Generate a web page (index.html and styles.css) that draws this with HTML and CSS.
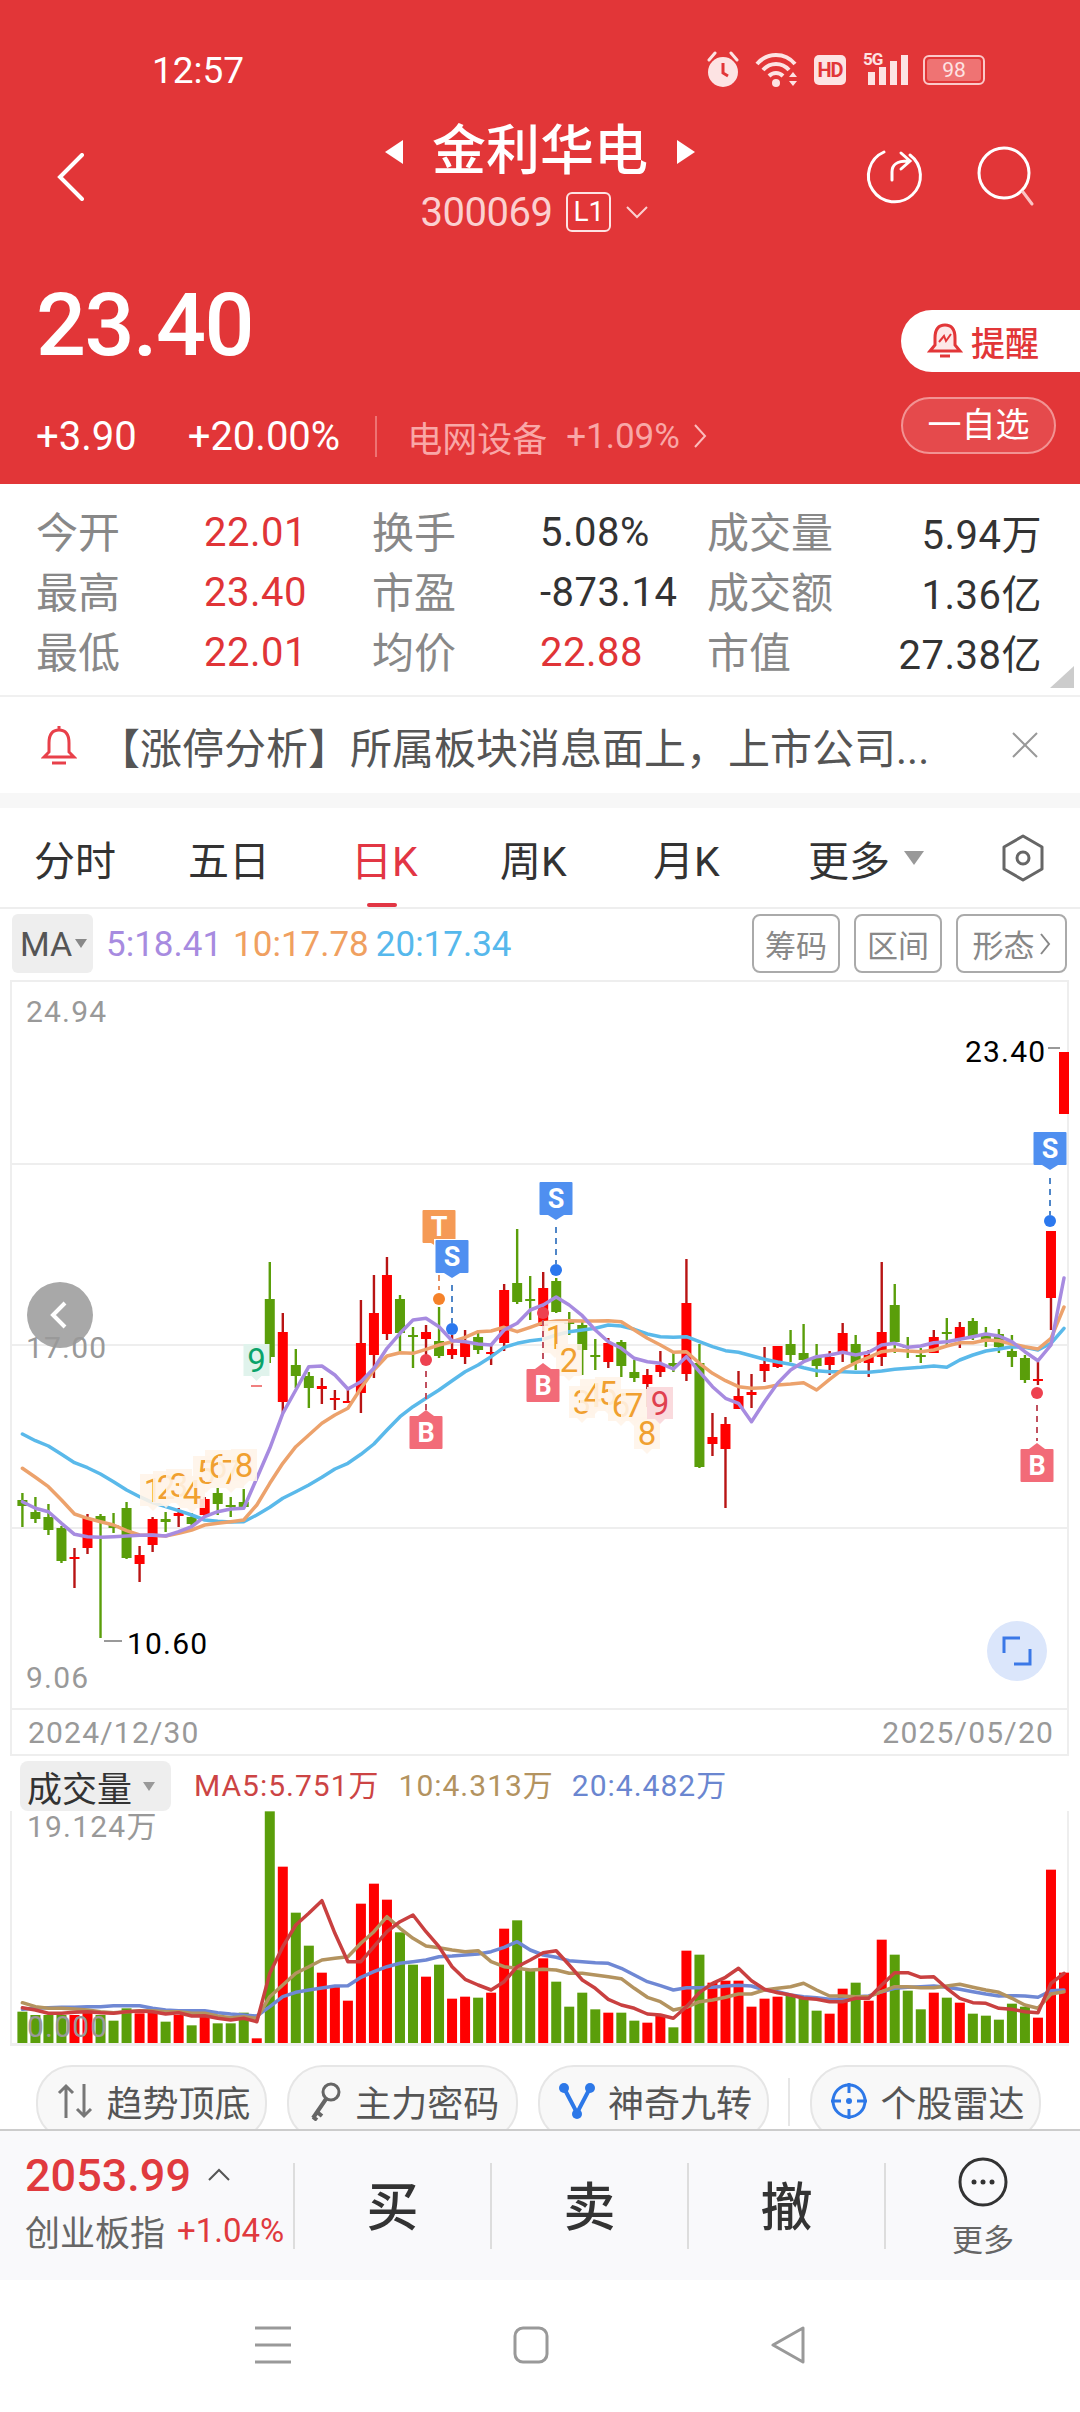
FILE: index.html
```html
<!DOCTYPE html>
<html>
	<head>
		<meta charset="utf-8">
		<title>金利华电</title>
		<link rel="stylesheet" href="styles.css">
	</head>
	<body>
		<header class="top">
			<div class="status">
				<span class="time">12:57</span>
				<div class="status-icons">
					<svg width="34" height="38" viewBox="0 0 34 38">
						<path d="M3 9 L9 2 M31 9 L25 2" stroke="#fde3e3" stroke-width="3" stroke-linecap="round"/>
						<circle cx="17" cy="21" r="15" fill="#fde3e3"/>
						<path d="M17 12 V22 L22 25" stroke="#e23638" stroke-width="3" fill="none"/>
					</svg>
					<svg width="44" height="36" viewBox="0 0 44 36">
						<path d="M2 12 C12 0 30 0 40 12 M8 18 C15 10 27 10 34 18 M14 24 C18 20 24 20 28 24" stroke="#fde3e3" stroke-width="4" fill="none"/>
						<circle cx="21" cy="31" r="4" fill="#fde3e3"/>
						<path d="M34 25 L38 20 L42 25 Z M34 29 H42 L38 34 Z" fill="#fde3e3"/>
					</svg>
					<span class="hd">HD</span>
					<div class="signal">
						<span class="five-g">5G</span>
						<i class="bar b1"></i><i class="bar b2"></i><i class="bar b3"></i><i class="bar b4"></i>
					</div>
					<div class="battery"><span class="battery-in">98</span></div>
				</div>
			</div>

			<div class="nav">
				<svg class="back" width="28" height="48" viewBox="0 0 28 48"><path d="M25 2 L3 24 L25 46" stroke="#fff" stroke-width="4" fill="none" stroke-linecap="round"/></svg>
				<div class="title-box">
					<div class="title-row">
						<i class="tri-left"></i>
						<span class="title">金利华电</span>
						<i class="tri-right"></i>
					</div>
					<div class="code-row">
						<span>300069</span>
						<span class="level">L1</span>
						<svg width="24" height="14" viewBox="0 0 24 14"><path d="M2 2 L12 12 L22 2" stroke="#fbd0d0" stroke-width="2" fill="none"/></svg>
					</div>
				</div>
				<div class="nav-actions">
					<svg width="60" height="60" viewBox="0 0 60 60">
						<path d="M21 6 A26 26 0 1 0 47 9" stroke="#fff" stroke-width="3" fill="none" stroke-linecap="round"/>
						<path d="M29 34 V26 C29 18 34 15 45 15 M38 7 L47 15 L38 23" stroke="#fff" stroke-width="3" fill="none" stroke-linecap="round"/>
					</svg>
					<svg width="60" height="60" viewBox="0 0 60 60">
						<circle cx="28" cy="27" r="25" stroke="#fff" stroke-width="3" fill="none"/>
						<path d="M47 46 L56 58" stroke="#fbc4c4" stroke-width="3" stroke-linecap="round"/>
					</svg>
				</div>
			</div>

			<div class="quote">
				<div class="quote-left">
					<div class="price">23.40</div>
					<div class="change-row">
						<span class="change">+3.90</span>
						<span class="change">+20.00%</span>
						<i class="change-line"></i>
						<span class="sector">电网设备</span>
						<span class="sector-num">+1.09%</span>
						<svg width="14" height="26" viewBox="0 0 14 26"><path d="M2 2 L12 13 L2 24" stroke="#fbbcbc" stroke-width="2" fill="none"/></svg>
					</div>
				</div>
				<div class="quote-right">
					<div class="remind">
						<svg width="36" height="38" viewBox="0 0 36 38">
							<path d="M18 3 C10 3 8 9 8 16 V23 L3 29 H33 L28 23 V16 C28 9 26 3 18 3 Z" stroke="#e23638" stroke-width="3" fill="#fde8e8"/>
							<path d="M12 20 L17 14 L19 19 L24 12" stroke="#e23638" stroke-width="2" fill="none"/>
							<path d="M13 34 H23" stroke="#e23638" stroke-width="3"/>
						</svg>
						<span>提醒</span>
					</div>
					<div class="watch">一自选</div>
				</div>
			</div>
		</header>

		<section class="data-grid">
			<span class="lbl">今开</span><span class="val red">22.01</span>
			<span class="lbl">换手</span><span class="val">5.08%</span>
			<span class="lbl">成交量</span><span class="val end">5.94万</span>
			<span class="lbl">最高</span><span class="val red">23.40</span>
			<span class="lbl">市盈</span><span class="val">-873.14</span>
			<span class="lbl">成交额</span><span class="val end">1.36亿</span>
			<span class="lbl">最低</span><span class="val red">22.01</span>
			<span class="lbl">均价</span><span class="val red">22.88</span>
			<span class="lbl">市值</span><span class="val end">27.38亿</span>
			<i class="corner"></i>
		</section>

		<section class="news">
			<svg width="36" height="42" viewBox="0 0 36 42">
				<path d="M18 6 C10 6 8 12 8 19 V28 L3 33 H33 L28 28 V19 C28 12 26 6 18 6 Z M18 2 V6" stroke="#e8404a" stroke-width="3" fill="none"/>
				<path d="M11 39 H25" stroke="#e8404a" stroke-width="3"/>
			</svg>
			<span class="news-text">【涨停分析】所属板块消息面上，上市公司...</span>
			<svg class="news-close" width="28" height="26" viewBox="0 0 28 26"><path d="M2 1 L26 25 M26 1 L2 25" stroke="#999" stroke-width="2"/></svg>
		</section>

		<nav class="tabs">
			<span class="tab">分时</span>
			<span class="tab">五日</span>
			<span class="tab active">日K</span>
			<span class="tab">周K</span>
			<span class="tab">月K</span>
			<span class="tab">更多<i class="tab-tri"></i></span>
			<svg width="44" height="48" viewBox="0 0 44 48">
				<path d="M22 2 L41 13 V35 L22 46 L3 35 V13 Z" stroke="#666" stroke-width="3" fill="none" stroke-linejoin="round"/>
				<circle cx="22" cy="24" r="6" stroke="#666" stroke-width="3" fill="none"/>
			</svg>
		</nav>

		<div class="ma-row">
			<span class="ma-box">MA<i class="small-tri"></i></span>
			<span class="ma5">5:18.41</span>
			<span class="ma10">10:17.78</span>
			<span class="ma20">20:17.34</span>
			<span class="ma-btns">
				<span class="ma-btn">筹码</span>
				<span class="ma-btn">区间</span>
				<span class="ma-btn wide">形态<svg width="12" height="24" viewBox="0 0 12 24"><path d="M2 2 L10 12 L2 22" stroke="#888" stroke-width="2" fill="none"/></svg></span>
			</span>
		</div>

		<div class="chart-wrap">
			<svg id="kline" class="chart-svg" width="1080" height="730" viewBox="0 980 1080 730"></svg>
		</div>

		<div class="dates">
			<span>2024/12/30</span>
			<span>2025/05/20</span>
		</div>

		<div class="vol-wrap">
			<div class="vol-head">
				<span class="vol-box">成交量<i class="small-tri"></i></span>
				<span class="vol5">MA5:5.751万</span>
				<span class="vol10">10:4.313万</span>
				<span class="vol20">20:4.482万</span>
			</div>
			<svg id="volume" class="chart-svg" width="1080" height="235" viewBox="0 1811 1080 235"></svg>
		</div>

		<div class="chips">
			<span class="chip">
				<svg width="38" height="38" viewBox="0 0 38 38"><path d="M10 36 V4 M3 11 L10 4 L17 11 M28 2 V34 M21 27 L28 34 L35 27" stroke="#777" stroke-width="3" fill="none"/></svg>
				趋势顶底
			</span>
			<span class="chip">
				<svg width="34" height="40" viewBox="0 0 34 40"><circle cx="22" cy="11" r="8" stroke="#666" stroke-width="3" fill="none"/><path d="M17 18 L4 37 M8 31 L13 35 M4 36 L8 39" stroke="#666" stroke-width="4" fill="none"/></svg>
				主力密码
			</span>
			<span class="chip">
				<svg width="38" height="40" viewBox="0 0 38 40"><path d="M6 7 L19 32 L32 7" stroke="#2d78e8" stroke-width="4" fill="none"/><circle cx="6" cy="7" r="5" fill="#2d78e8"/><circle cx="32" cy="7" r="5" fill="#2d78e8"/><circle cx="19" cy="33" r="5" fill="#2d78e8"/></svg>
				神奇九转
			</span>
			<i class="chip-line"></i>
			<span class="chip">
				<svg width="38" height="40" viewBox="0 0 38 40"><circle cx="19" cy="20" r="16" stroke="#2d78e8" stroke-width="3" fill="none"/><path d="M19 2 V12 M19 28 V38 M1 20 H11 M27 20 H37" stroke="#2d78e8" stroke-width="3"/><circle cx="19" cy="20" r="3" fill="#2d78e8"/></svg>
				个股雷达
			</span>
		</div>

		<div class="trade-bar">
			<div class="index-box">
				<div class="index-top">
					<span class="index-num">2053.99</span>
					<svg width="24" height="14" viewBox="0 0 24 14"><path d="M2 12 L12 2 L22 12" stroke="#555" stroke-width="2" fill="none"/></svg>
				</div>
				<div class="index-bottom">
					<span class="index-name">创业板指</span>
					<span class="index-pct">+1.04%</span>
				</div>
			</div>
			<span class="trade-btn">买</span>
			<span class="trade-btn">卖</span>
			<span class="trade-btn">撤</span>
			<div class="trade-more">
				<svg width="50" height="50" viewBox="0 0 50 50"><circle cx="25" cy="25" r="23" stroke="#333" stroke-width="3" fill="none"/><circle cx="16" cy="25" r="2.5" fill="#333"/><circle cx="25" cy="25" r="2.5" fill="#333"/><circle cx="34" cy="25" r="2.5" fill="#333"/></svg>
				<span>更多</span>
			</div>
		</div>

		<div class="sys-nav">
			<svg width="36" height="38" viewBox="0 0 36 38"><path d="M0 2 H36 M0 19 H36 M0 36 H36" stroke="#999" stroke-width="3"/></svg>
			<svg width="36" height="38" viewBox="0 0 36 38"><rect x="2" y="2" width="32" height="34" rx="8" stroke="#999" stroke-width="3" fill="none"/></svg>
			<svg width="36" height="38" viewBox="0 0 36 38"><path d="M33 2 V36 L3 19 Z" stroke="#999" stroke-width="3" fill="none" stroke-linejoin="round"/></svg>
		</div>

		<script src="chart.js"></script>
	</body>
</html>
```

FILE: styles.css
```css
* {margin: 0; padding: 0; box-sizing: border-box;}

body {
	width: 1080px;
	height: 2412px;
	overflow: hidden;
	background: #fff;
	font-family: Roboto, "Noto Sans CJK SC", sans-serif;
	color: #333;
}

i {display: block; font-style: normal;}
svg {display: block; flex-shrink: 0;}

/* red header */
.top {
	height: 484px;
	background: #e23638;
	color: #fff;
}

.status {
	height: 120px;
	padding: 20px 95px 0 152px;
	display: flex;
	align-items: center;
	justify-content: space-between;
}

.time {font-size: 37px; color: #fff;}

.status-icons {
	display: flex;
	align-items: center;
	gap: 15px;
}

.hd {
	width: 32px;
	height: 30px;
	background: #fde3e3;
	border-radius: 5px;
	color: #e23638;
	font-size: 20px;
	font-weight: 700;
	line-height: 30px;
	text-align: center;
	letter-spacing: -1px;
}

.signal {
	position: relative;
	width: 47px;
	height: 30px;
	display: flex;
	align-items: flex-end;
	justify-content: flex-end;
	gap: 4px;
}

.five-g {
	position: absolute;
	left: 2px;
	top: -6px;
	font-size: 17px;
	font-weight: 700;
	color: #fde3e3;
	letter-spacing: -1px;
}

.bar {width: 7px; background: #fde3e3;}
.b1 {height: 13px;}
.b2 {height: 18px;}
.b3 {height: 24px;}
.b4 {height: 30px;}

.battery {
	width: 62px;
	height: 30px;
	border: 2px solid #fbc9c9;
	border-radius: 6px;
	padding: 2px;
}

.battery-in {
	display: block;
	height: 100%;
	background: #ef7373;
	border-radius: 3px;
	color: #fde3e3;
	font-size: 21px;
	line-height: 22px;
	text-align: center;
}

.nav {
	height: 120px;
	display: grid;
	grid-template-columns: 1fr auto 1fr;
}

.back {margin: 33px 0 0 57px;}

.title-row {
	height: 64px;
	display: flex;
	align-items: center;
	justify-content: center;
	gap: 29px;
}

.title {font-size: 54px; font-weight: 500; line-height: 64px;}

.tri-left, .tri-right {
	width: 0;
	height: 0;
	border-top: 12px solid transparent;
	border-bottom: 12px solid transparent;
}
.tri-left {border-right: 18px solid #fff;}
.tri-right {border-left: 18px solid #fff;}

.code-row {
	height: 56px;
	padding-right: 10px;
	display: flex;
	align-items: center;
	justify-content: center;
	gap: 14px;
	font-size: 40px;
	color: #fbd0d0;
	letter-spacing: -.5px;
}

.level {
	width: 45px;
	height: 40px;
	border: 2px solid #fde3e3;
	border-radius: 6px;
	color: #fff;
	font-size: 28px;
	line-height: 36px;
	text-align: center;
	letter-spacing: 0;
}

.nav-actions {
	display: flex;
	justify-content: flex-end;
	gap: 53px;
	padding: 26px 44px 0 0;
}

.quote {
	height: 244px;
	display: flex;
	justify-content: space-between;
}

.quote-left {padding: 40px 0 0 36px;}

.price {
	height: 90px;
	font-size: 88px;
	font-weight: 500;
	line-height: 90px;
	letter-spacing: -1.5px;
}

.change-row {
	height: 40px;
	margin-top: 46px;
	display: flex;
	align-items: center;
}

.change {font-size: 40px; margin-right: 51px;}
.change + .change {margin-right: 35px;}
.change-line {width: 2px; height: 41px; background: #ee7373;}
.sector {margin-left: 30px; font-size: 35px; color: #f9a7a7;}
.sector-num {margin: 0 13px 0 19px; font-size: 35px; color: #f9a7a7;}

.quote-right {
	width: 179px;
	padding-top: 70px;
}

.remind {
	height: 62px;
	background: #fff;
	border-radius: 31px 0 0 31px;
	display: flex;
	align-items: center;
	gap: 8px;
	padding-left: 26px;
	color: #e23638;
	font-size: 34px;
	font-weight: 500;
}

.watch {
	width: 155px;
	height: 57px;
	margin-top: 25px;
	border: 2px solid #f29393;
	border-radius: 29px;
	background: #e54a4c;
	font-size: 34px;
	line-height: 52px;
	text-align: center;
}

/* quote data */
.data-grid {
	position: relative;
	height: 213px;
	padding: 18px 0 0 36px;
	display: grid;
	grid-template-columns: 168px 168px 168px 167px 150px 185px;
	grid-auto-rows: 60px;
	align-items: center;
	border-bottom: 2px solid #f0f0f0;
}

.lbl {font-size: 42px; color: #888; margin-top: -6px;}
.val {font-size: 40px; color: #333; letter-spacing: .5px;}
.val.red {color: #e03437;}
.val.end {text-align: right;}

.corner {
	position: absolute;
	right: 6px;
	bottom: 7px;
	width: 0;
	height: 0;
	border-bottom: 22px solid #ccc;
	border-left: 24px solid transparent;
}

.news {
	height: 111px;
	padding: 0 41px 0 41px;
	display: flex;
	align-items: center;
	border-bottom: 15px solid #f7f7f7;
}

.news-text {
	width: 914px;
	margin-left: 21px;
	font-size: 42px;
	color: #555;
	white-space: nowrap;
}

/* period tabs */
.tabs {
	height: 101px;
	padding-left: 34px;
	display: grid;
	grid-template-columns: 154px 163px 149px 153px 155px 193px 44px;
	align-items: center;
	border-bottom: 2px solid #eee;
}

.tab {
	position: relative;
	display: flex;
	align-items: center;
	font-size: 41px;
	color: #333;
	height: 99px;
	white-space: nowrap;
}

.tab-tri {
	margin-left: 14px;
	border-top: 14px solid #999;
	border-left: 10px solid transparent;
	border-right: 10px solid transparent;
}

.tab.active {color: #e23644;}

.tab.active::after {
	content: "";
	position: absolute;
	left: 16px;
	bottom: 0;
	width: 30px;
	height: 4px;
	border-radius: 2px;
	background: #e23644;
}

/* MA legend */
.ma-row {
	height: 71px;
	padding: 5px 13px 0 12px;
	display: flex;
	align-items: flex-start;
	font-size: 35px;
}

.ma-box {
	width: 81px;
	height: 59px;
	background: #eee;
	border-radius: 6px;
	display: flex;
	align-items: center;
	padding-left: 8px;
	margin-right: 13px;
	color: #555;
	font-size: 34px;
}

.small-tri {
	margin-left: 3px;
	border-top: 9px solid #888;
	border-left: 6px solid transparent;
	border-right: 6px solid transparent;
}

.ma5, .ma10, .ma20 {line-height: 62px;}
.ma5 {color: #a78be0;}
.ma10 {margin-left: 11px; color: #f0a060;}
.ma20 {margin-left: 7px; color: #56b8ec;}

.ma-btns {
	margin-left: auto;
	display: flex;
	gap: 14px;
}

.ma-btn {
	width: 88px;
	height: 59px;
	border: 2px solid #aaa;
	border-radius: 8px;
	display: flex;
	align-items: center;
	justify-content: center;
	gap: 4px;
	color: #888;
	font-size: 31px;
}

.ma-btn.wide {width: 111px;}

/* charts */
.chart-wrap {height: 730px;}
.chart-svg {overflow: visible;}

.axis {font-size: 30px; fill: #999; letter-spacing: 1.2px;}
.axis-dark {font-size: 30px; fill: #000; letter-spacing: 1.2px;}
.tag-letter {font-size: 27px; font-weight: 700; fill: #fff; text-anchor: middle;}
.tag-num {font-size: 33px; text-anchor: middle;}

.dates {
	height: 46px;
	margin: 0 11px 0 10px;
	padding: 0 13px 0 16px;
	border-left: 2px solid #eee;
	border-right: 2px solid #eee;
	border-bottom: 2px solid #eee;
	display: flex;
	align-items: center;
	justify-content: space-between;
	color: #999;
	font-size: 30px;
	letter-spacing: 1.2px;
}

.vol-head {
	height: 55px;
	padding: 5px 0 0 20px;
	display: flex;
	align-items: flex-start;
	font-size: 30px;
	letter-spacing: 1px;
}

.vol-box {
	width: 151px;
	height: 50px;
	background: #eee;
	border-radius: 8px;
	display: flex;
	align-items: center;
	padding-left: 7px;
	color: #333;
	font-size: 35px;
	letter-spacing: 0;
}

.vol-box .small-tri {margin-left: 11px; border-top-color: #999;}

.vol5, .vol10, .vol20 {line-height: 50px;}
.vol5 {margin-left: 23px; color: #cc4444;}
.vol10 {margin-left: 19px; color: #b3935f;}
.vol20 {margin-left: 18px; color: #6a86d0;}

/* shortcut chips, cut off by the trade bar */
.chips {
	height: 83px;
	padding: 19px 39px 0 36px;
	display: flex;
	justify-content: space-between;
	overflow: hidden;
}

.chip {
	width: 231px;
	height: 76px;
	flex-shrink: 0;
	border: 2px solid #e6e6e6;
	border-radius: 36px;
	background: #f8f8f8;
	display: flex;
	align-items: center;
	justify-content: center;
	gap: 12px;
	color: #555;
	font-size: 36px;
	white-space: nowrap;
	padding: 0 0 4px 4px;
}

.chip-line {
	width: 2px;
	height: 48px;
	margin-top: 13px;
	background: #e6e6e6;
}

/* trade bar */
.trade-bar {
	height: 151px;
	background: #f9f9fb;
	border-top: 2px solid #ccc;
	display: flex;
	padding-top: 32px;
}

.index-box {
	width: 295px;
	height: 86px;
	padding-left: 25px;
	border-right: 2px solid #ddd;
}

.index-top {
	height: 40px;
	margin-top: -8px;
	display: flex;
	align-items: center;
	gap: 16px;
}

.index-num {font-size: 45px; font-weight: 500; color: #e03a3e;}

.index-bottom {
	display: flex;
	align-items: center;
	gap: 12px;
	margin-top: 10px;
	white-space: nowrap;
}

.index-name {font-size: 35px; color: #666;}
.index-pct {font-size: 33px; color: #e03a3e;}

.trade-btn {
	width: 197px;
	height: 86px;
	border-right: 2px solid #ddd;
	font-size: 52px;
	font-weight: 500;
	line-height: 92px;
	text-align: center;
	color: #333;
}

.trade-more {
	width: 194px;
	margin-top: -6px;
	display: flex;
	flex-direction: column;
	align-items: center;
	color: #666;
	font-size: 31px;
	gap: 16px;
	line-height: 36px;
}

.sys-nav {
	height: 132px;
	padding: 46px 274px 0 255px;
	display: flex;
	justify-content: space-between;
	align-items: flex-start;
}
```

FILE: chart.js
```js
// 日K 数据，全部是页面上的 y 坐标
const X0 = 22.4, STEP = 13.02;
const xOf = i => X0 + STEP * i;
const lineY = z => 1320 + z / 3;
const volY = z => 1740 + z / 3;

const RED = "#ff0000", GREEN = "#5a9e0a";

// [wick top, body top, body bottom, wick bottom, r/g]
const candles = [
	[1493,1500,1506,1527,"g"],[1497,1512,1519,1523,"g"],[1504,1517,1530,1535,"g"],[1526,1528,1561,1563,"g"],
	[1548,1557,1559,1588,"r"],[1514,1518,1548,1554,"r"],[1514,1516,1521,1638,"g"],[1513,1525,1528,1533,"g"],
	[1502,1508,1558,1559,"g"],[1546,1555,1564,1582,"r"],[1517,1519,1545,1552,"r"],[1512,1519,1522,1532,"g"],
	[1508,1513,1516,1527,"r"],[1513,1517,1524,1528,"g"],[1497,1499,1515,1517,"r"],[1488,1493,1504,1515,"g"],
	[1497,1505,1506,1517,"g"],[1489,1502,1507,1508,"g"],[1385,1385,1387,1387,"r"],[1262,1299,1357,1363,"g"],
	[1313,1332,1402,1413,"r"],[1349,1365,1376,1388,"g"],[1372,1376,1388,1408,"g"],[1378,1386,1389,1404,"r"],
	[1390,1398,1400,1410,"r"],[1390,1401,1402,1403,"r"],[1300,1343,1393,1413,"r"],[1275,1313,1355,1378,"r"],
	[1257,1275,1334,1340,"r"],[1295,1299,1333,1352,"g"],[1327,1335,1336,1368,"g"],[1325,1332,1339,1355,"r"],
	[1307,1341,1356,1358,"g"],[1335,1349,1355,1359,"r"],[1330,1342,1357,1364,"r"],[1333,1337,1350,1354,"g"],
	[1345,1352,1353,1365,"r"],[1284,1290,1343,1351,"r"],[1229,1283,1302,1304,"g"],[1276,1299,1300,1320,"g"],
	[1272,1288,1326,1332,"r"],[1278,1281,1312,1313,"g"],[1312,1322,1323,1335,"g"],[1320,1325,1350,1375,"g"],
	[1339,1355,1357,1370,"g"],[1338,1343,1362,1368,"r"],[1340,1342,1366,1377,"g"],[1360,1372,1378,1382,"g"],
	[1369,1375,1384,1407,"r"],[1351,1365,1372,1377,"r"],[1353,1363,1366,1372,"g"],[1259,1303,1374,1381,"r"],
	[1344,1363,1467,1468,"g"],[1413,1437,1444,1456,"r"],[1417,1424,1449,1508,"r"],[1371,1396,1409,1409,"r"],
	[1374,1392,1395,1408,"r"],[1347,1364,1371,1382,"r"],[1346,1346,1367,1368,"r"],[1330,1344,1355,1362,"g"],
	[1324,1353,1360,1363,"g"],[1344,1357,1366,1377,"g"],[1351,1357,1365,1375,"r"],[1323,1333,1353,1362,"r"],
	[1335,1344,1363,1370,"g"],[1350,1355,1363,1377,"r"],[1262,1332,1357,1366,"r"],[1284,1305,1342,1353,"g"],
	[1337,1346,1347,1358,"g"],[1348,1355,1356,1363,"g"],[1330,1337,1353,1353,"r"],[1318,1332,1333,1347,"g"],
	[1322,1327,1340,1348,"r"],[1318,1321,1337,1340,"g"],[1327,1334,1341,1347,"g"],[1329,1334,1347,1353,"g"],
	[1335,1351,1357,1367,"g"],[1355,1358,1380,1383,"g"],[1362,1379,1381,1385,"r"],[1231,1231,1298,1330,"r"],
	[1052,1052,1114,1114,"r"]
];

const ma5 = [545,565,575,610,643,650,652,650,648,646,645,648,635,620,590,575,567,565,475,385,280,210,140,138,165,207,185,145,85,40,0,-5,20,62,65,72,75,30,10,-30,-45,-69,-45,-13,30,65,85,115,125,130,147,110,155,200,235,250,305,245,190,150,125,110,105,97,105,97,75,70,82,78,68,65,58,50,42,48,65,95,122,75,-126];
const ma10 = [445,472,500,540,582,595,605,615,632,645,646,648,640,630,615,610,605,600,555,490,430,380,345,310,285,265,205,150,108,98,100,88,75,65,52,35,33,22,35,22,8,3,2,3,3,2,5,30,55,75,97,95,130,160,182,200,205,203,195,192,188,210,178,148,128,112,95,90,93,95,90,78,68,68,60,62,72,80,87,55,-39];
const ma20 = [342,362,378,403,428,443,462,485,510,530,548,560,572,585,600,604,606,605,585,562,535,515,495,472,447,430,403,372,330,290,260,235,210,182,155,135,110,82,70,62,58,45,35,30,25,15,18,28,42,50,52,50,65,80,92,97,107,118,126,133,143,152,155,155,157,157,153,148,145,142,138,142,120,105,93,87,80,82,90,70,25];

// 成交量柱的顶部
const volTop = [815,825,825,825,825,815,825,842,805,820,815,845,825,856,825,850,850,818,895,214,380,518,617,698,735,782,491,431,479,577,674,710,674,776,770,773,758,566,541,690,655,725,800,758,808,818,818,842,848,825,862,632,644,728,722,722,800,776,770,765,776,812,821,746,728,782,599,644,752,808,758,773,788,821,827,839,791,800,833,389,698];
const vol5 = [803,810,820,820,817,815,818,820,815,813,815,822,818,828,827,835,840,835,845,700,620,555,520,482,580,665,665,620,575,545,525,575,620,680,718,735,750,725,680,660,638,632,675,720,745,778,795,805,822,825,835,800,758,730,712,685,722,748,758,765,775,778,785,785,775,775,735,698,698,712,710,745,775,788,790,805,808,815,818,730,700];
const vol10 = [788,800,805,805,807,810,815,818,815,812,812,815,815,820,820,828,833,830,835,770,735,700,680,660,655,650,610,575,530,565,595,618,623,630,635,632,665,680,685,690,688,690,700,700,705,710,716,745,772,785,810,802,785,780,772,762,762,750,745,740,730,750,768,768,770,770,755,740,740,743,743,738,733,742,750,757,775,795,805,762,755];
const vol20 = [808,805,803,802,802,800,800,797,797,797,805,810,812,812,812,818,822,825,828,800,770,757,750,744,738,737,712,695,680,670,665,660,650,648,645,642,635,622,605,630,645,652,662,665,668,670,685,705,725,737,750,743,743,742,738,736,738,750,755,765,770,773,778,778,770,768,755,745,742,740,738,742,748,755,762,768,767,768,772,752,750];

function el(parent, tag, attrs, text) {
	const node = document.createElementNS("http://www.w3.org/2000/svg", tag);
	for (const key in attrs) node.setAttribute(key, attrs[key]);
	if (text !== undefined) node.textContent = text;
	parent.appendChild(node);
	return node;
}

function hLine(svg, y) {
	el(svg, "rect", {x: 10, y: y, width: 1059, height: 2, fill: "#eee"});
}

function polyline(svg, values, toY, color, width) {
	const pts = values.map((v, i) => xOf(i).toFixed(1) + "," + toY(v).toFixed(1)).join(" ");
	el(svg, "polyline", {points: pts, fill: "none", stroke: color, "stroke-width": width, "stroke-linejoin": "round", "stroke-linecap": "round"});
}

function dashed(svg, x, y1, y2, color) {
	el(svg, "line", {x1: x, x2: x, y1: y1, y2: y2, stroke: color, "stroke-width": 2, "stroke-dasharray": "6 5"});
}

// 买卖标记：方块加一个小尖角
function signTag(svg, cx, top, letter, color, nubUp) {
	const nub = nubUp
		? `${cx - 8},${top} ${cx},${top - 6} ${cx + 8},${top}`
		: `${cx - 8},${top + 33} ${cx},${top + 38} ${cx + 8},${top + 33}`;
	el(svg, "polygon", {points: nub, fill: color});
	el(svg, "rect", {x: cx - 16.5, y: top, width: 33, height: 33, rx: 1, fill: color});
	el(svg, "text", {x: cx, y: top + 26, class: "tag-letter"}, letter);
}

function numTag(svg, cx, cy, num, color, bg) {
	el(svg, "rect", {x: cx - 13, y: cy - 16, width: 26, height: 32, fill: bg});
	el(svg, "polygon", {points: `${cx - 5},${cy + 16} ${cx},${cy + 21} ${cx + 5},${cy + 16}`, fill: bg});
	el(svg, "text", {x: cx, y: cy + 12, class: "tag-num", fill: color}, num);
}

function drawKline() {
	const svg = document.getElementById("kline");

	el(svg, "rect", {x: 10, y: 980, width: 2, height: 730, fill: "#eee"});
	el(svg, "rect", {x: 1067, y: 980, width: 2, height: 730, fill: "#eee"});
	[980, 1163, 1344, 1527, 1708].forEach(y => hLine(svg, y));

	el(svg, "circle", {cx: 60, cy: 1315, r: 33, fill: "#a8a8a8"});
	el(svg, "path", {d: "M65 1303 L53 1315 L65 1327", fill: "none", stroke: "#fff", "stroke-width": 4});

	el(svg, "text", {x: 26, y: 1022, class: "axis"}, "24.94");
	el(svg, "text", {x: 26, y: 1358, class: "axis"}, "17.00");
	el(svg, "text", {x: 26, y: 1688, class: "axis"}, "9.06");

	candles.forEach((c, i) => {
		const x = xOf(i), up = c[4] === "r";
		el(svg, "line", {x1: x, x2: x, y1: c[0], y2: c[3], stroke: up ? "#b81414" : GREEN, "stroke-width": 2.4});
		el(svg, "rect", {x: x - 5, y: c[1], width: 10, height: Math.max(c[2] - c[1], 2), fill: up ? RED : GREEN});
	});

	polyline(svg, ma20, lineY, "#5ab9ea", 3.5);
	polyline(svg, ma10, lineY, "#eca26c", 3.5);
	polyline(svg, ma5, lineY, "#a78be0", 3.5);

	// 九转序号
	const orange = "#f0a030", paper = "rgba(255,244,232,.88)";
	[[153,1490,"1"],[166,1487,"2"],[179,1485,"3"],[192,1492,"4"],[206,1472,"5"],[218,1466,"6"],[231,1472,"7"],[244,1465,"8"]]
		.forEach(t => numTag(svg, t[0], t[1], t[2], orange, paper));
	numTag(svg, 256.5, 1360, "9", "#0aa36a", "#e0f3ec");
	el(svg, "rect", {x: 251, y: 1385, width: 11, height: 2, fill: "#f08080"});

	[[555,1337,"1"],[569,1360,"2"],[582,1402,"3"],[593,1395,"4"],[608,1393,"5"],[621,1405,"6"],[634,1405,"7"],[647,1433,"8"]]
		.forEach(t => numTag(svg, t[0], t[1], t[2], orange, paper));
	numTag(svg, 660, 1403, "9", "#e0404f", "#fadadd");

	// T / S / B
	dashed(svg, 439, 1275, 1290, "#e89060");
	el(svg, "circle", {cx: 439, cy: 1299, r: 6, fill: "#f5822a"});
	signTag(svg, 439, 1210, "T", "#f59a55", false);
	dashed(svg, 452, 1285, 1323, "#4f86c8");
	el(svg, "circle", {cx: 452, cy: 1329, r: 6, fill: "#2b78ee"});
	el(svg, "rect", {x: 434, y: 1239, width: 36, height: 35, fill: "#fff"});
	signTag(svg, 452, 1240, "S", "#4f8ff0", false);

	dashed(svg, 556, 1227, 1264, "#4f86c8");
	el(svg, "circle", {cx: 556, cy: 1270, r: 6, fill: "#2b78ee"});
	signTag(svg, 556, 1182, "S", "#4f8ff0", false);

	dashed(svg, 1050, 1178, 1215, "#4f86c8");
	el(svg, "circle", {cx: 1050, cy: 1221, r: 6, fill: "#2b78ee"});
	signTag(svg, 1050, 1132, "S", "#4f8ff0", false);

	dashed(svg, 426, 1371, 1410, "#c0505e");
	el(svg, "circle", {cx: 426, cy: 1360, r: 6, fill: "#ee4150"});
	signTag(svg, 426, 1416, "B", "#f26b78", true);

	dashed(svg, 543, 1320, 1362, "#c0505e");
	el(svg, "circle", {cx: 543, cy: 1313, r: 6, fill: "#ee4150"});
	signTag(svg, 543, 1369, "B", "#f26b78", true);

	dashed(svg, 1037, 1405, 1441, "#c0505e");
	el(svg, "circle", {cx: 1037, cy: 1393, r: 6, fill: "#ee4150"});
	signTag(svg, 1037, 1449, "B", "#f26b78", true);

	// 最高最低价
	el(svg, "text", {x: 965, y: 1062, class: "axis-dark"}, "23.40");
	el(svg, "rect", {x: 1048, y: 1047, width: 12, height: 2, fill: "#999"});
	el(svg, "text", {x: 127, y: 1654, class: "axis-dark"}, "10.60");
	el(svg, "rect", {x: 104, y: 1640, width: 18, height: 2, fill: "#999"});

	el(svg, "circle", {cx: 1017, cy: 1651, r: 30, fill: "#dbe6fb"});
	el(svg, "path", {d: "M1004 1653 V1638 H1020 M1030 1649 V1664 H1014", fill: "none", stroke: "#3b78e7", "stroke-width": 3});
}

function drawVolume() {
	const svg = document.getElementById("volume");

	el(svg, "rect", {x: 10, y: 1811, width: 2, height: 235, fill: "#eee"});
	el(svg, "rect", {x: 1067, y: 1811, width: 2, height: 235, fill: "#eee"});
	el(svg, "rect", {x: 10, y: 2043, width: 1059, height: 3, fill: "#eee"});

	volTop.forEach((z, i) => {
		const top = volY(z);
		el(svg, "rect", {x: xOf(i) - 5, y: top, width: 10, height: 2043 - top, fill: candles[i][4] === "r" ? RED : GREEN});
	});

	polyline(svg, vol20, volY, "#6f88d4", 3.5);
	polyline(svg, vol10, volY, "#b3935f", 3.5);
	polyline(svg, vol5, volY, "#c94040", 3.5);

	el(svg, "text", {x: 27, y: 1837, class: "axis"}, "19.124万");
	el(svg, "text", {x: 27, y: 2037, class: "axis"}, "0.000");
}

drawKline();
drawVolume();
```
